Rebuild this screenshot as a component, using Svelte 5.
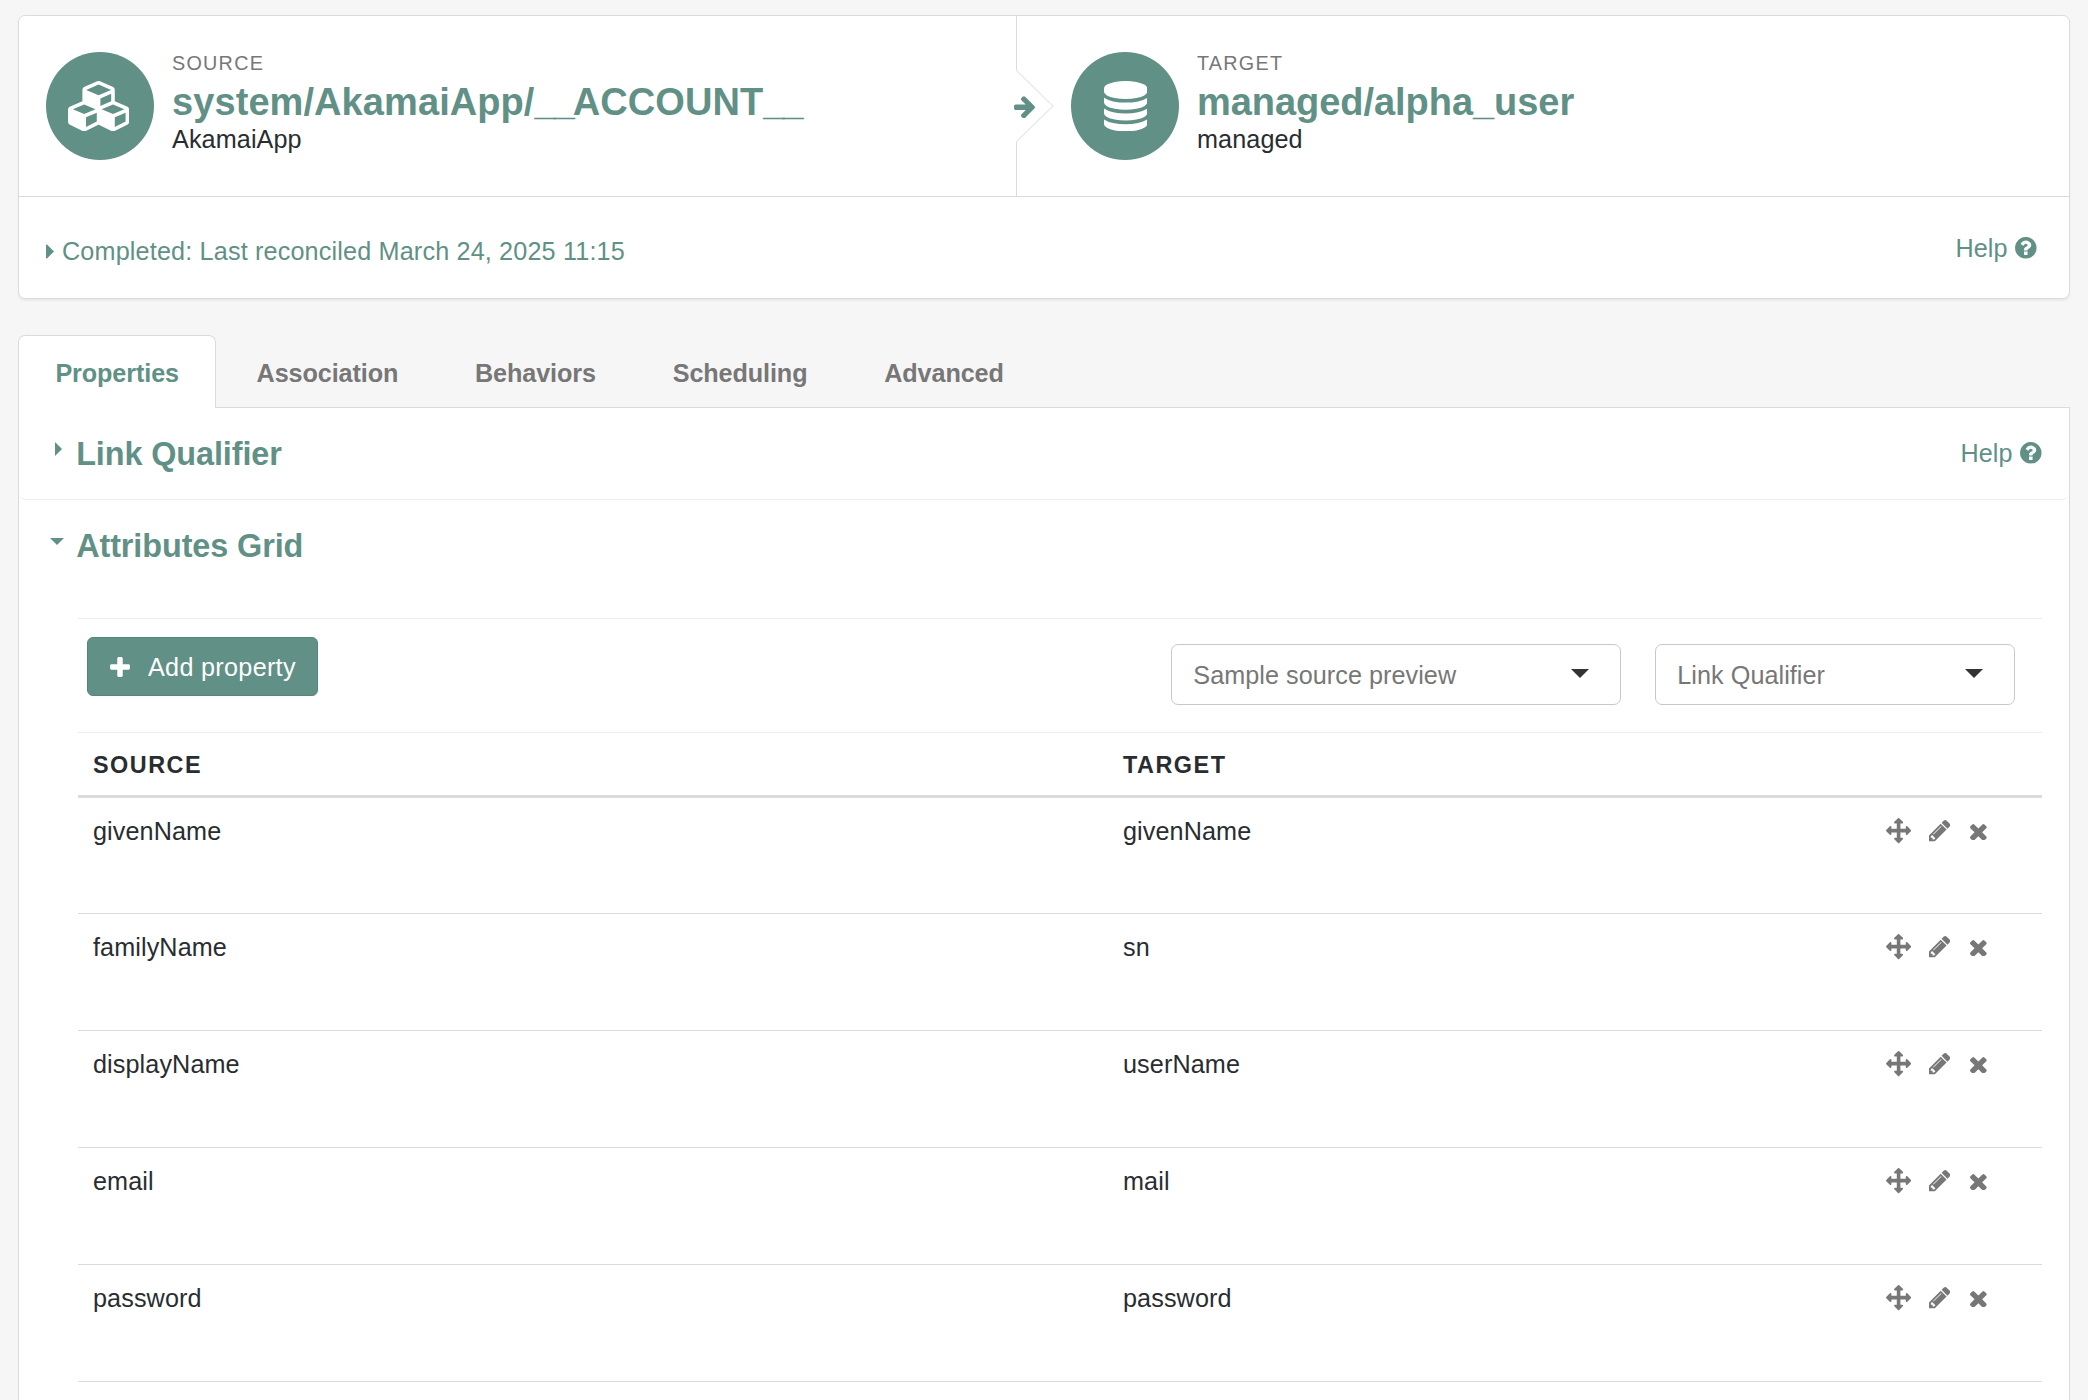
<script>
  const tabs = ['Properties', 'Association', 'Behaviors', 'Scheduling', 'Advanced'];
  const active = 'Properties';

  const rows = [
    { source: 'givenName', target: 'givenName' },
    { source: 'familyName', target: 'sn' },
    { source: 'displayName', target: 'userName' },
    { source: 'email', target: 'mail' },
    { source: 'password', target: 'password' },
    { source: '', target: '' }
  ];
</script>

{#snippet help()}
  <a class="help" href="#help">
    <span>Help</span>
    <svg class="help-icon" viewBox="128 128 1536 1536"><path d="M1024 1376v-192q0-14-9-23t-23-9h-192q-14 0-23 9t-9 23v192q0 14 9 23t23 9h192q14 0 23-9t9-23zm256-672q0-88-55.500-163t-138.500-116-170.500-41q-243 0-371 213-15 24 8 42l132 100q7 6 19 6 16 0 25-12 53-68 86-92 34-24 86-24 48 0 85.500 26t37.500 59q0 38-20 61t-68 45q-63 28-115.500 86.500t-52.500 125.500v36q0 14 9 23t23 9h192q14 0 23-9t9-23q0-19 21.500-49.500t54.500-49.500q32-18 49-28.500t46-35 44.500-48 28-60.500 12.500-81zm384 192q0 209-103 385.500t-279.500 279.500-385.500 103-385.500-103-279.500-279.500-103-385.500 103-385.500 279.500-279.500 385.500-103 385.500 103 279.500 279.500 103 385.500z" /></svg>
  </a>
{/snippet}

<main class="page">
  <section class="card">
    <div class="mapping">
      <div class="side source">
        <div class="avatar">
          <svg class="cubes" viewBox="0 0 2176 1792"><path d="M640 1632l384-192v-314l-384 164v342zm-64-454l404-173-404-173-404 173zm1088 454l384-192v-314l-384 164v342zm-64-454l404-173-404-173-404 173zm-448-293l384-165v-266l-384 164v267zm-64-379l441-189-441-189-441 189zm1088 518v416q0 36-19 67t-52 47l-448 224q-25 14-57 14t-57-14l-448-224q-4-2-7-4-2 2-7 4l-448 224q-25 14-57 14t-57-14l-448-224q-33-16-52-47t-19-67v-416q0-38 21.500-70t56.500-48l434-186v-400q0-38 21.500-70t56.500-48l448-192q23-10 50-10t50 10l448 192q35 16 56.500 48t21.500 70v400l434 186q36 16 57 48t21 70z" /></svg>
        </div>
        <div class="labels">
          <div class="kind">SOURCE</div>
          <h1>system/AkamaiApp/<span class="line">__</span>ACCOUNT<span class="line">__</span></h1>
          <div class="sub">AkamaiApp</div>
        </div>
      </div>
      <div class="side target">
        <svg class="chevron" viewBox="0 0 40 74"><path d="M1 1L38 37L1 73" /></svg>
        <svg class="arrow" viewBox="128 165 1472 1590"><path d="M1600 960q0 54-37 91l-651 651q-39 37-91 37-51 0-90-37l-75-75q-38-38-38-91t38-91l293-293h-704q-52 0-84.500-37.500t-32.500-90.500v-128q0-53 32.500-90.500t84.500-37.500h704l-293-294q-38-36-38-90t38-90l75-75q38-38 90-38 53 0 91 38l651 651q37 35 37 90z" /></svg>
        <div class="avatar">
          <svg class="database" viewBox="128 0 1536 1792"><path d="M896 768q237 0 443-43t325-127v170q0 69-103 128t-280 93.500-385 34.500-385-34.500-280-93.500-103-128v-170q119 84 325 127t443 43zm0 768q237 0 443-43t325-127v170q0 69-103 128t-280 93.500-385 34.500-385-34.500-280-93.500-103-128v-170q119 84 325 127t443 43zm0-384q237 0 443-43t325-127v170q0 69-103 128t-280 93.500-385 34.500-385-34.500-280-93.500-103-128v-170q119 84 325 127t443 43zm0-1152q208 0 385 34.500t280 93.500 103 128v128q0 69-103 128t-280 93.500-385 34.500-385-34.500-280-93.500-103-128v-128q0-69 103-128t280-93.500 385-34.500z" /></svg>
        </div>
        <div class="labels">
          <div class="kind">TARGET</div>
          <h1 class="wide">managed/alpha_user</h1>
          <div class="sub">managed</div>
        </div>
      </div>
    </div>
    <div class="status">
      <a class="recon" href="#recon">
        <svg class="recon-caret" viewBox="0 0 8 15"><path d="M0 1.200Q0 0 1 .6L8 7.500L1 14.400Q0 15 0 13.800Z" /></svg>
        <span>Completed: Last reconciled March 24, 2025 11:15</span>
      </a>
      {@render help()}
    </div>
  </section>

  <nav class="tabs">
    {#each tabs as tab}
      <a class="tab" class:active={tab === active} href="#{tab}">{tab}</a>
    {/each}
  </nav>

  <div class="panel">
    <section class="link-section">
      <div class="heading">
        <span class="toggle"><svg class="caret-right" viewBox="0 0 7 14"><path d="M0 0L7 7L0 14Z" /></svg></span>
        <h2>Link Qualifier</h2>
      </div>
      {@render help()}
    </section>

    <section class="attributes">
      <div class="heading">
        <span class="toggle"><svg class="caret-down" viewBox="0 0 14 7"><path d="M0 0H14L7 7Z" /></svg></span>
        <h2>Attributes Grid</h2>
      </div>

      <div class="grid">
        <div class="toolbar">
          <button class="add">
            <svg class="plus" viewBox="192 128 1408 1408"><path d="M1600 736v192q0 40-28 68t-68 28h-416v416q0 40-28 68t-68 28h-192q-40 0-68-28t-28-68v-416h-416q-40 0-68-28t-28-68v-192q0-40 28-68t68-28h416v-416q0-40 28-68t68-28h192q40 0 68 28t28 68v416h416q40 0 68 28t28 68z" /></svg>
            <span>Add property</span>
          </button>
          <div class="selects">
            <div class="select sample">
              <span>Sample source preview</span>
              <svg class="select-caret" viewBox="0 0 18 9"><path d="M0 0H18L9 9Z" /></svg>
            </div>
            <div class="select qualifier">
              <span>Link Qualifier</span>
              <svg class="select-caret" viewBox="0 0 18 9"><path d="M0 0H18L9 9Z" /></svg>
            </div>
          </div>
        </div>

        <div class="row head">
          <span>SOURCE</span>
          <span>TARGET</span>
        </div>
        {#each rows as row}
          <div class="row">
            <span>{row.source}</span>
            <span>{row.target}</span>
            <div class="actions">
              <svg class="move" viewBox="0 0 1792 1792"><path d="M1792 896q0 26-19 45l-256 256q-19 19-45 19t-45-19-19-45v-128h-384v384h128q26 0 45 19t19 45-19 45l-256 256q-19 19-45 19t-45-19l-256-256q-19-19-19-45t19-45 45-19h128v-384h-384v128q0 26-19 45t-45 19-45-19l-256-256q-19-19-19-45t19-45l256-256q19-19 45-19t45 19 19 45v128h384v-384h-128q-26 0-45-19t-19-45 19-45l256-256q19-19 45-19t45 19l256 256q19 19 19 45t-19 45-45 19h-128v384h384v-128q0-26 19-45t45-19 45 19l256 256q19 19 19 45z" /></svg>
              <svg class="edit" viewBox="128 149 1515 1515"><path d="M491 1536l91-91-235-235-91 91v107h128v128h107zm523-928q0-22-22-22-10 0-17 7l-542 542q-7 7-7 17 0 22 22 22 10 0 17-7l542-542q7-7 7-17zm-54-192l416 416-832 832h-416v-416zm683 96q0 53-37 90l-166 166-416-416 166-165q36-38 90-38 53 0 91 38l235 234q37 39 37 91z" /></svg>
              <svg class="remove" viewBox="302 366 1188 1188"><path d="M1490 1322q0 40-28 68l-136 136q-28 28-68 28t-68-28l-294-294-294 294q-28 28-68 28t-68-28l-136-136q-28-28-28-68t28-68l294-294-294-294q-28-28-28-68t28-68l136-136q28-28 68-28t68 28l294 294 294-294q28-28 68-28t68 28l136 136q28 28 28 68t-28 68l-294 294 294 294q28 28 28 68z" /></svg>
            </div>
          </div>
        {/each}
      </div>
    </section>
  </div>
</main>

<style>
  :global(body) {
    background: #f6f6f6;
    overflow: hidden;
  }

  .page {
    --green: #619086;
    --line: #dadbdb;
    --soft: #ececec;
    box-sizing: border-box;
    height: 1400px;
    overflow: hidden;
    padding: 15px 18px 0;
    background: #f6f6f6;
    color: #292d31;
    font-family: 'Liberation Sans', Arial, sans-serif;
    font-size: 25.2px;
    line-height: 36px;
    letter-spacing: 0.1px;
    white-space: nowrap;
  }

  .page :is(div, section, nav, a, button) {
    box-sizing: border-box;
  }

  a {
    color: var(--green);
    text-decoration: none;
  }

  svg {
    display: block;
    flex: none;
    fill: currentColor;
  }

  h1,
  h2 {
    margin: 0;
    color: var(--green);
    font-weight: 700;
  }

  .card {
    height: 284px;
    background: #fff;
    border: 1px solid var(--line);
    border-radius: 7px;
    box-shadow: 0 2px 2px rgba(0, 0, 0, 0.05);
  }

  .mapping {
    display: grid;
    grid-template-columns: 997px 1fr;
    height: 181px;
    border-bottom: 1px solid var(--line);
  }

  .side {
    display: flex;
    align-items: flex-start;
    gap: 18px;
    padding-top: 36px;
  }

  .source {
    padding-left: 27px;
  }

  .target {
    position: relative;
    padding-left: 54px;
    border-left: 1px solid var(--line);
  }

  .avatar {
    display: flex;
    align-items: center;
    justify-content: center;
    width: 108px;
    height: 108px;
    border-radius: 50%;
    background: var(--green);
    color: #fff;
  }

  .cubes {
    width: 61.2px;
    height: 50.4px;
    margin-right: 3px;
  }

  .database {
    width: 43.2px;
    height: 50.4px;
    margin-left: 1px;
  }

  .labels {
    margin-top: -1px;
  }

  .kind {
    height: 24px;
    margin-bottom: 7px;
    color: #777;
    font-size: 19.8px;
    line-height: 24px;
    letter-spacing: 1.25px;
  }

  h1 {
    font-size: 38px;
    line-height: 40px;
    letter-spacing: 0.08px;
  }

  h1 .line {
    letter-spacing: -2px;
  }

  h1.wide {
    letter-spacing: -0.05px;
  }

  .sub {
    line-height: 34px;
  }

  .chevron {
    position: absolute;
    top: 53px;
    left: -2px;
    width: 40px;
    height: 74px;
  }

  .chevron path {
    fill: #fff;
    stroke: #e9e9e9;
    stroke-width: 1.3;
  }

  .arrow {
    position: absolute;
    top: 79.7px;
    left: -3px;
    width: 21px;
    height: 22.6px;
    color: var(--green);
  }

  .status {
    display: flex;
    justify-content: space-between;
    padding: 33px 32px 0 27px;
  }

  .recon {
    display: flex;
    align-items: center;
    gap: 8px;
    height: 36px;
    margin-top: 3px;
    letter-spacing: 0.16px;
  }

  .recon-caret {
    width: 8px;
    height: 15px;
  }

  .help {
    display: flex;
    align-items: center;
    gap: 8px;
    height: 36px;
    letter-spacing: 0;
  }

  .help-icon {
    width: 21.6px;
    height: 21.6px;
  }

  .tabs {
    display: flex;
    gap: 3.6px;
    height: 73px;
    margin-top: 36px;
    border-bottom: 1px solid var(--line);
  }

  .tab {
    height: 73px;
    padding: 19px 35.6px 0;
    border: 1px solid transparent;
    border-bottom: 0;
    border-radius: 7px 7px 0 0;
    color: #777;
    font-weight: 700;
    letter-spacing: -0.1px;
  }

  .tab.active {
    padding: 19px 36.4px 0;
    border-color: var(--line);
    background: #fff;
    color: var(--green);
  }

  .panel {
    height: 1000px;
    background: #fff;
    border: 1px solid var(--line);
    border-width: 0 1px;
  }

  .link-section {
    display: flex;
    justify-content: space-between;
    height: 92px;
    padding: 24px 27px 0 0;
    border-bottom: 1px solid var(--soft);
    border-radius: 0 0 7px 7px;
  }

  .link-section .help {
    margin-top: 3px;
  }

  .heading {
    display: flex;
    height: 44px;
  }

  .toggle {
    width: 57.2px;
    color: var(--green);
  }

  .caret-right {
    width: 7px;
    height: 14px;
    margin: 10px 0 0 36px;
  }

  .caret-down {
    width: 14px;
    height: 7px;
    margin: 14px 0 0 31px;
  }

  h2 {
    font-size: 32.4px;
    line-height: 44px;
    letter-spacing: -0.1px;
  }

  .attributes {
    padding: 24px 27px 0 0;
  }

  .grid {
    margin: 50px 0 0 59px;
  }

  .toolbar {
    display: flex;
    justify-content: space-between;
    align-items: flex-start;
    height: 114px;
    padding: 18px 27px 0 9px;
    border-top: 1px solid var(--soft);
  }

  .add {
    display: flex;
    align-items: center;
    gap: 18px;
    width: 231px;
    height: 59px;
    padding: 0 0 0 22px;
    border: 1px solid #55857a;
    border-radius: 6px;
    background: var(--green);
    color: #fff;
    font: inherit;
    letter-spacing: 0.3px;
  }

  .plus {
    width: 20px;
    height: 20px;
  }

  .selects {
    display: flex;
    gap: 34px;
    margin-top: 7px;
  }

  .select {
    display: flex;
    align-items: center;
    justify-content: space-between;
    height: 61px;
    padding: 0 31px 0 21.3px;
    border: 1px solid #c8c8c8;
    border-radius: 7px;
    color: #777;
    letter-spacing: 0.05px;
  }

  .sample {
    width: 450px;
  }

  .qualifier {
    width: 360px;
  }

  .select-caret {
    width: 18px;
    height: 9px;
    margin-top: -2px;
    color: #333;
  }

  .row {
    display: grid;
    grid-template-columns: 1030px 762.6px auto;
    align-items: start;
    justify-content: start;
    height: 117px;
    padding: 15px 0 0 15px;
    border-top: 1px solid var(--line);
  }

  .row.head {
    height: 66px;
    padding-top: 14px;
    border-top-color: var(--soft);
    border-bottom: 3px solid var(--line);
    font-size: 23.4px;
    font-weight: 700;
    letter-spacing: 1.5px;
  }

  .row.head + .row {
    height: 115px;
    border-top: 0;
  }

  .actions {
    display: flex;
    align-items: center;
    height: 36px;
    color: #777;
  }

  .move {
    width: 25.2px;
    height: 25.2px;
  }

  .edit {
    width: 21.3px;
    height: 21.3px;
    margin-left: 18px;
  }

  .remove {
    width: 16.7px;
    height: 16.7px;
    margin: 2px 0 0 20px;
  }
</style>
